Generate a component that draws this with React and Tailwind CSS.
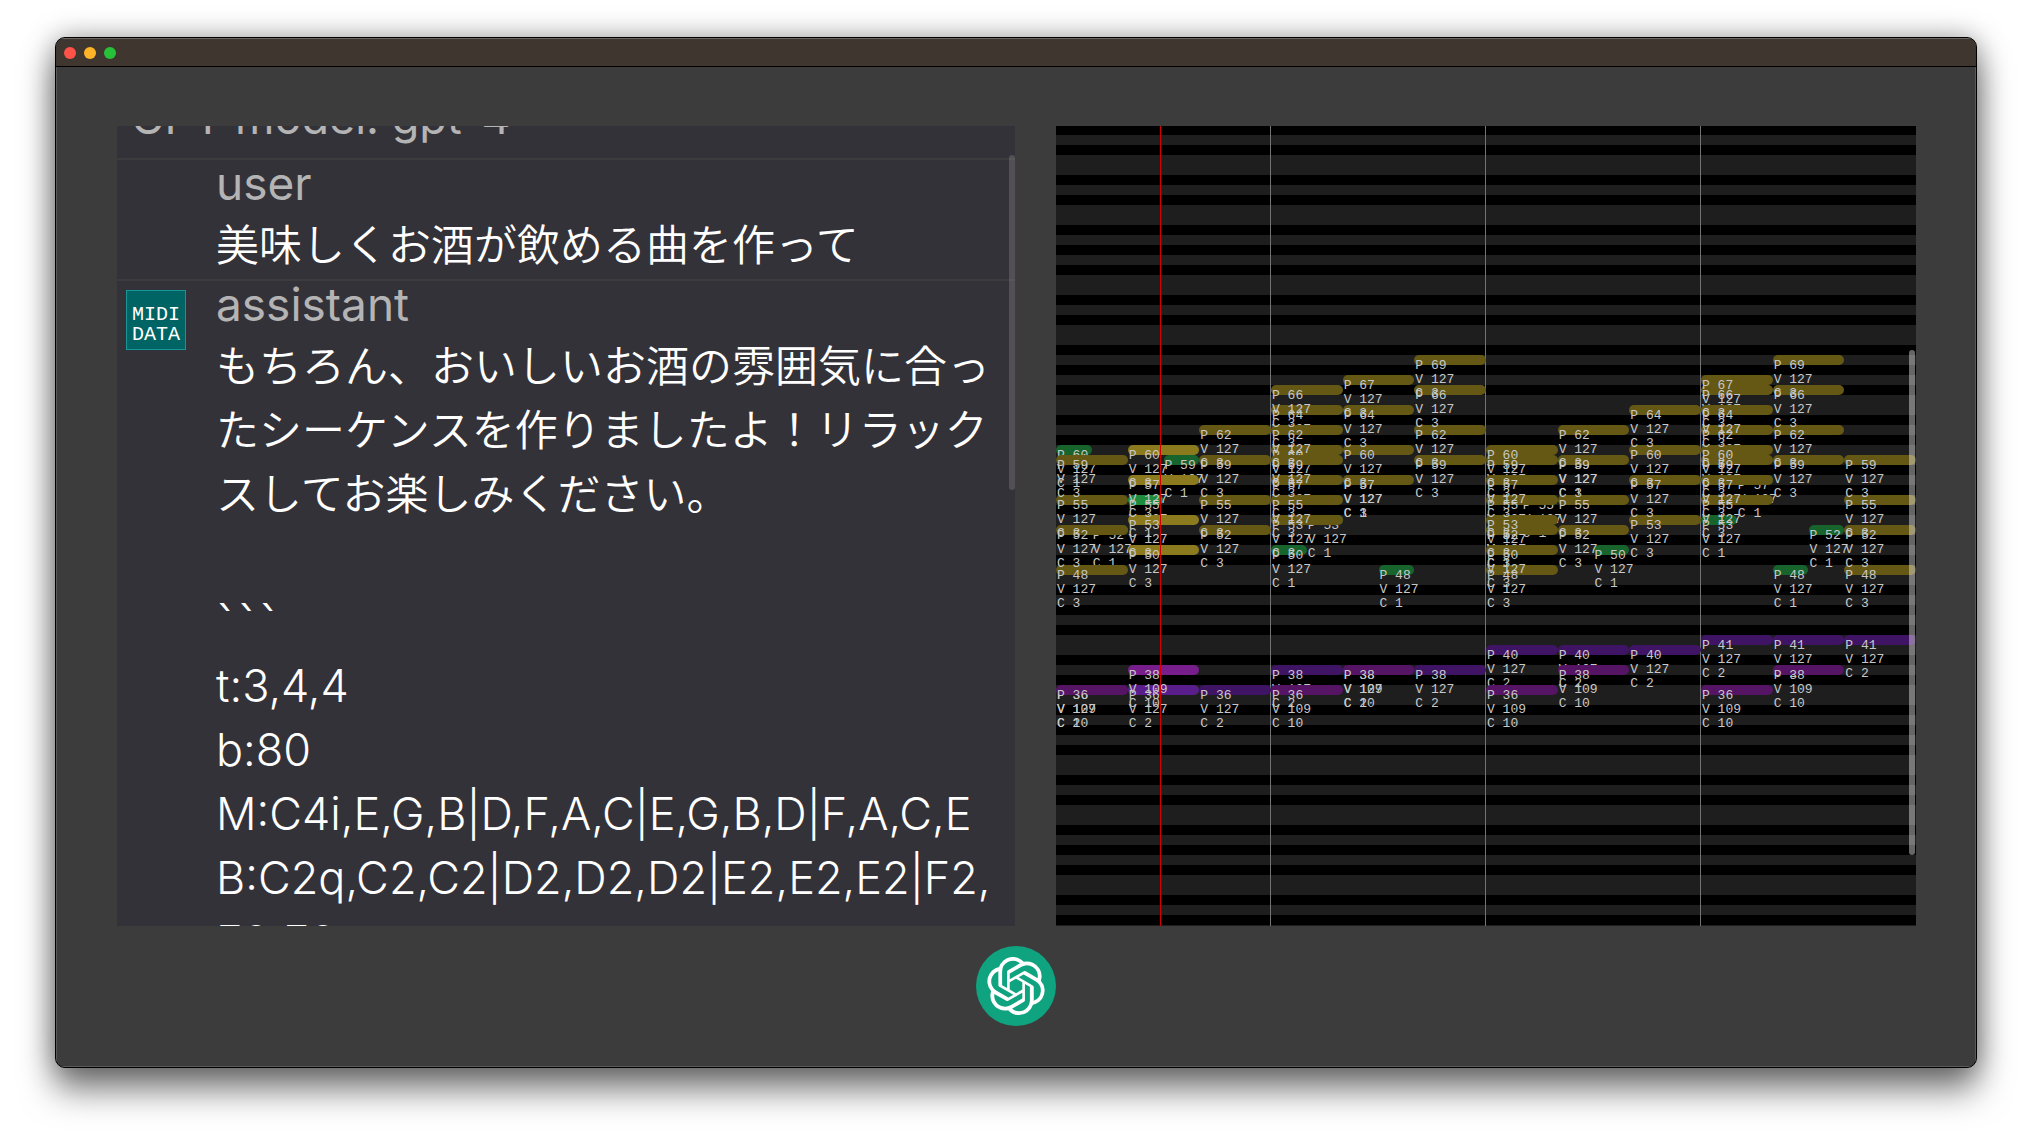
import React from "react";
import { SiOpenai } from "react-icons/si";

const TOP_PITCH = 92;
const LANE_COUNT = 81;
const LANE_HEIGHT = 10;
const BARS = 4;
const BEATS_PER_BAR = 3;
const TOTAL_BEATS = BARS * BEATS_PER_BAR;
const SHARPS = [1, 3, 6, 8, 10];

const COLORS = {
  1: ["bg-[#17642c]", "bg-[#1e8c3c]"],
  2: ["bg-[#3f1464]", "bg-[#5a1e8c]"],
  3: ["bg-[#645814]", "bg-[#8c7a1e]"],
  10: ["bg-[#551464]", "bg-[#781e8c]"],
};

const melody = [60, 52, 55, 59, 50, 53, 57, 48, 52, 55, 59, 50, 53, 57, 48, 52].map((pitch, i) => ({
  channel: 1,
  pitch,
  start: Math.floor(i / 4) * BEATS_PER_BAR + (i % 4) / 2,
  length: 0.5,
  velocity: 127,
}));

const bass = [36, 36, 36, 38, 38, 38, 40, 40, 40, 41, 41, 41].map((pitch, start) => ({
  channel: 2,
  pitch,
  start,
  length: 1,
  velocity: 127,
}));

const chords = [
  [0, [48, 52, 55, 59]],
  [1, [50, 53, 57, 60]],
  [2, [52, 55, 59, 62]],
  [3, [53, 57, 60, 64]],
  [3, [55, 59, 62, 66]],
  [4, [57, 60, 64, 67]],
  [5, [59, 62, 66, 69]],
  [6, [48, 52, 55, 59]],
  [6, [50, 53, 57, 60]],
  [7, [52, 55, 59, 62]],
  [8, [53, 57, 60, 64]],
  [9, [55, 59, 62, 66]],
  [9, [57, 60, 64, 67]],
  [10, [59, 62, 66, 69]],
  [11, [48, 52, 55, 59]],
].flatMap(([start, pitches]) =>
  pitches.map((pitch) => ({ channel: 3, pitch, start, length: 1, velocity: 127 }))
);

const drums = [0, 3, 6, 9].flatMap((start) => [
  { channel: 10, pitch: 36, start, length: 1, velocity: 109 },
  { channel: 10, pitch: 38, start: start + 1, length: 1, velocity: 109 },
]);

const notes = [...melody, ...bass, ...chords, ...drums];
const playhead = 1.458;

const percent = (beats) => `${(beats / TOTAL_BEATS) * 100}%`;

function Note({ channel, pitch, start, length, velocity }) {
  const playing = start <= playhead && playhead < start + length;
  return (
    <div
      className="absolute h-[10px]"
      style={{
        left: percent(start),
        width: percent(length),
        top: (TOP_PITCH - pitch) * LANE_HEIGHT,
      }}
    >
      <div className={`h-full rounded-full ${COLORS[channel][playing ? 1 : 0]}`} />
      <div className="absolute left-px top-1 whitespace-pre font-['Liberation_Mono',monospace] text-[13px] leading-[14px] text-[#c8c8c8]">
        <p>P {pitch}</p>
        <p>V {velocity}</p>
        <p>C {channel}</p>
      </div>
    </div>
  );
}

function PianoRoll() {
  return (
    <section aria-label="Piano roll" className="relative min-w-0 flex-[860] overflow-hidden bg-black">
      <div className="relative -mt-px">
        {Array.from({ length: LANE_COUNT }, (_, i) => (
          <div
            key={i}
            className={`h-[10px] ${SHARPS.includes((TOP_PITCH - i) % 12) ? "bg-black" : "bg-[#1e1e1e]"}`}
          />
        ))}
        {[1, 2, 3].map((bar) => (
          <div
            key={bar}
            className="absolute inset-y-0 -ml-px w-px bg-[#737373]"
            style={{ left: percent(bar * BEATS_PER_BAR) }}
          />
        ))}
        {notes.map((note, i) => (
          <Note key={i} {...note} />
        ))}
        <div className="absolute inset-y-0 w-px bg-[#d20000]" style={{ left: percent(playhead) }} />
      </div>
      <div className="absolute right-px top-[28%] h-[505px] w-1.5 rounded-full bg-white/40" />
    </section>
  );
}

function Message({ role, badge, children }) {
  return (
    <article className="flex border-t-2 border-[#3c3b3d]">
      <div className="w-[99px] shrink-0 pl-[9px] pt-[9px]">{badge}</div>
      <div className="min-w-0 flex-1 pb-0.5 pr-2">
        <h2 className="mb-[7px] text-[46px] font-normal leading-[46px] text-[#b4b4b4]">{role}</h2>
        {children}
      </div>
    </article>
  );
}

function MidiBadge() {
  return (
    <button
      type="button"
      className="flex h-[60px] w-[60px] flex-col items-center justify-end border border-[#149696] bg-[#006464] pb-1 font-['Liberation_Mono',monospace] text-[20px] leading-[20px] text-white"
    >
      <span>MIDI</span>
      <span>DATA</span>
    </button>
  );
}

function Chat() {
  return (
    <section
      aria-label="Chat"
      className="relative min-w-0 flex-[898] overflow-hidden bg-[#343239] font-['Inter','Noto_Sans_CJK_JP',sans-serif] font-[350] text-white"
    >
      <div className="-mt-10">
        <p className="pb-2 pl-3.5 text-[45px] font-normal leading-[64px] text-[#b4b4b4]">GPT model: gpt-4</p>
        <Message role="user">
          <p lang="ja" className="text-[43px] leading-[64px]">美味しくお酒が飲める曲を作って</p>
        </Message>
        <Message role="assistant" badge={<MidiBadge />}>
          <p lang="ja" className="text-[43px] leading-[64px]">
            もちろん、おいしいお酒の雰囲気に合ったシーケンスを作りましたよ！リラックスしてお楽しみください。
          </p>
          <div className="mt-16 break-all text-[45px] leading-[64px]">
            <p className="font-['DejaVu_Sans',sans-serif] text-[43px] font-normal">```</p>
            <p>t:3,4,4</p>
            <p>b:80</p>
            <p>M:C4i,E,G,B|D,F,A,C|E,G,B,D|F,A,C,E</p>
            <p>B:C2q,C2,C2|D2,D2,D2|E2,E2,E2|F2,F2,F2</p>
          </div>
        </Message>
      </div>
      <div className="absolute right-0 top-[29px] h-[335px] w-1.5 rounded-full bg-white/15" />
    </section>
  );
}

export default function App() {
  return (
    <div className="flex min-h-screen flex-col bg-white px-[55px] pb-[73px] pt-[37px]">
      <main className="flex flex-1 flex-col overflow-hidden rounded-[10px] border border-black bg-[#3c3c3c] shadow-[0_22px_34px_rgba(0,0,0,0.5),0_0_28px_rgba(0,0,0,0.35)]">
        <header className="flex h-[29px] items-center gap-2 border-b border-t border-b-black border-t-[#6e6862] bg-[#3f3630] px-2">
          <button type="button" aria-label="Close" className="h-3 w-3 rounded-full bg-[#ff5249]" />
          <button type="button" aria-label="Minimize" className="h-3 w-3 rounded-full bg-[#ffb428]" />
          <button type="button" aria-label="Zoom" className="h-3 w-3 rounded-full bg-[#26c138]" />
        </header>
        <div className="flex flex-1 flex-col border-x border-b border-[#5a5a5a] px-[59px] pb-10 pt-[59px]">
          <div className="flex h-[800px] gap-[41px] pl-px">
            <Chat />
            <PianoRoll />
          </div>
          <button
            type="button"
            aria-label="Ask ChatGPT"
            className="mt-5 flex h-20 w-20 items-center justify-center self-center rounded-full bg-[#10a37f] text-white"
          >
            <SiOpenai className="h-[58px] w-[58px]" />
          </button>
        </div>
      </main>
    </div>
  );
}
